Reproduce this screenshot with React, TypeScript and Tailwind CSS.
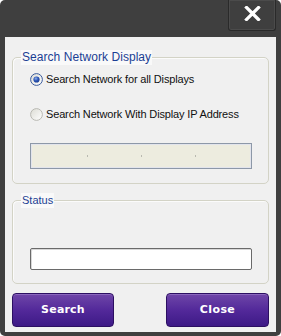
import React from "react";

function Radio({ checked }: { checked: boolean }) {
  return (
    <svg width="13" height="13" viewBox="0 0 13 13" className="shrink-0">
      <defs>
        <linearGradient id={checked ? "rgA" : "rgB"} x1="0" y1="0" x2="1" y2="1">
          <stop offset="0" stopColor="#dcdcd4" />
          <stop offset="1" stopColor="#ffffff" />
        </linearGradient>
        <radialGradient id="dot" cx="0.4" cy="0.35" r="0.7">
          <stop offset="0" stopColor="#8fb0ea" />
          <stop offset="0.5" stopColor="#2d56b8" />
          <stop offset="1" stopColor="#163a8c" />
        </radialGradient>
      </defs>
      <circle
        cx="6.5"
        cy="6.5"
        r="5.9"
        fill={`url(#${checked ? "rgA" : "rgB"})`}
        stroke={checked ? "#3a5a9c" : "#b8b8b2"}
        strokeWidth="1"
      />
      {checked && <circle cx="6.5" cy="6.5" r="3.1" fill="url(#dot)" />}
    </svg>
  );
}

export default function App() {
  const label = "text-[11px] tracking-[-0.15px] text-[#111] leading-[14px]";
  return (
    <div
      className="w-[281px] h-[336px] bg-white"
      style={{ fontFamily: '"Liberation Sans", Arial, sans-serif' }}
    >
      <div className="w-full h-full bg-[#3f3f3f] rounded-[5px] flex flex-col overflow-hidden">
        {/* title bar */}
        <div className="h-[37px] flex justify-end items-start pr-[5px] shrink-0">
          <div className="w-[48px] h-[31px] border border-t-0 border-[#2a2a2a] rounded-b-[3px] shadow-[inset_0_0_0_1px_#4b4b4b] flex justify-center pt-[6px]">
            <svg width="17" height="15" viewBox="0 0 17 15">
              <path
                d="M2.5 1.5 L14.5 13.5 M14.5 1.5 L2.5 13.5"
                stroke="#ffffff"
                strokeWidth="3.2"
                strokeLinecap="square"
              />
            </svg>
          </div>
        </div>

        {/* content */}
        <div className="mx-[5px] h-[295px] bg-[#f0f0f0] flex flex-col px-[7px] pb-[5px] shrink-0">
          {/* group 1 */}
          <div className="relative mt-[20px] h-[127px] border border-[#d3d3c6] rounded-[5px] shadow-[inset_1px_1px_0_#fbfbfb] flex flex-col pl-[17px] pt-[14px] pb-[14px]">
            <span className="absolute left-[8px] -top-[8px] bg-[#f9f9f9] px-[1px] text-[12px] tracking-[0.05px] leading-[15px] text-[#1c3f94]">
              Search Network Display
            </span>
            <div className="flex items-center gap-[3px] h-[14px]">
              <Radio checked />
              <span className={label}>Search Network for all Displays</span>
            </div>
            <div className="flex items-center gap-[3px] h-[14px] mt-[21px]">
              <Radio checked={false} />
              <span className={label}>Search Network With Display IP Address</span>
            </div>
            <div className="mt-[22px] w-[222px] h-[26px] border border-[#8d98a8] bg-[#edecdf] shadow-[inset_0_0_0_1px_#e2e4ec] flex items-center pl-[56px] gap-[53px]">
              <span className="w-[1px] h-[2px] bg-[#b9b9b0]" />
              <span className="w-[1px] h-[2px] bg-[#b9b9b0]" />
              <span className="w-[1px] h-[2px] bg-[#b9b9b0]" />
            </div>
          </div>

          {/* group 2 */}
          <div className="relative mt-[16px] h-[84px] border border-[#d3d3c6] rounded-[5px] shadow-[inset_1px_1px_0_#fbfbfb] flex flex-col pl-[17px] pt-[47px]">
            <span className="absolute left-[8px] -top-[8px] bg-[#f9f9f9] px-[1px] text-[11px] leading-[15px] text-[#1c3f94]">
              Status
            </span>
            <div className="w-[222px] h-[22px] bg-white border border-[#6a6a6a] rounded-[2px] shadow-[inset_1px_1px_0_#d8d8d8]" />
          </div>

          {/* buttons */}
          <div className="mt-[9px] flex justify-between h-[34px]">
            <button
              className="w-[102px] h-[34px] rounded-[4px] border border-[#2c0f62] bg-gradient-to-b from-[#6f45a8] via-[#53299a] to-[#3d1986] shadow-[inset_0_1px_0_#8a66bd] text-white text-[11px] font-bold tracking-[0.2px]"
              style={{ fontFamily: '"DejaVu Sans", Verdana, sans-serif' }}
            >
              Search
            </button>
            <button
              className="w-[103px] h-[34px] rounded-[4px] border border-[#2c0f62] bg-gradient-to-b from-[#6f45a8] via-[#53299a] to-[#3d1986] shadow-[inset_0_1px_0_#8a66bd] text-white text-[11px] font-bold tracking-[0.4px]"
              style={{ fontFamily: '"DejaVu Sans", Verdana, sans-serif' }}
            >
              Close
            </button>
          </div>
        </div>
      </div>
    </div>
  );
}
